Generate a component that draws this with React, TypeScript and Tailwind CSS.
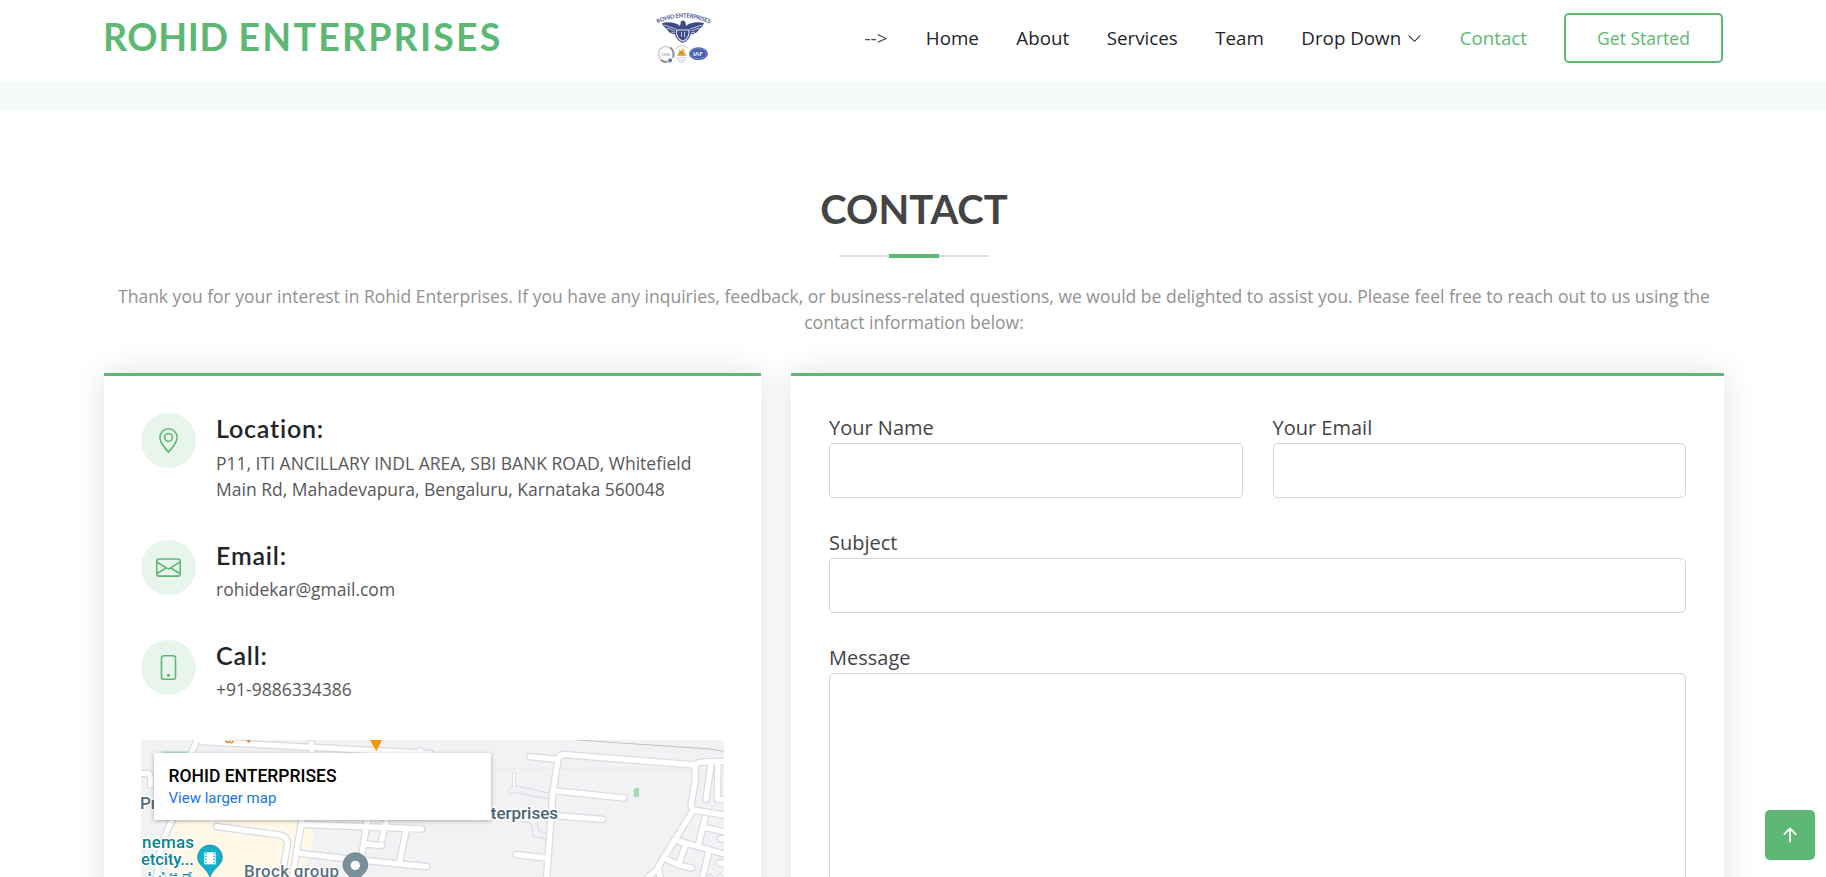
import React from "react";
import { BsGeoAlt, BsEnvelope, BsPhone, BsArrowUpShort, BsChevronDown } from "react-icons/bs";

const LINKS = ["Home", "About", "Services", "Team"];

function Logo() {
  return (
    <svg className="h-[54px] w-[60px]" viewBox="0 0 60 54">
      <path id="arc" d="M4.500 13.500 Q30 1.500 56 13.500" fill="none" />
      <text fontFamily="Lato, sans-serif" fontWeight="700" fontSize="5.8" fill="#4b588f" textLength="54">
        <textPath href="#arc">ROHID ENTERPRISES</textPath>
      </text>
      <g fill="#3a4b87">
        <path d="M9 13 C15 11.500 23 12 27 16 L28 11 L31 10.500 L32.500 12.500 L33 16 C37 12 45 11.500 51 13 C50 16 48 18 46 19 C45 22 42 24 38 24.500 L35 22 L25 22 L22 24.500 C18 24 15 22 14 19 C12 18 10 16 9 13Z" />
        <path d="M21.500 19 L38 19 C38.500 26 35 31 29.800 33 C24.500 31 21 26 21.500 19Z" />
      </g>
      <path d="M11 15 L23 19 M14 18 L22 21 M18 22L22 23 M49 15 L37 19 M46 18 L38 21 M42 22L38 23" stroke="#e3e6f0" strokeWidth=".8" />
      <path d="M23.500 20 L36 20 C36.500 26 34 29.500 29.800 31.300 C25.500 29.500 23 26 23.500 20Z" fill="none" stroke="#e6e9f3" strokeWidth="1.100" />
      <path d="M28.500 22v5M31.500 22v5" stroke="#c4cae0" strokeWidth="1" />
      <circle cx="13" cy="44" r="7.600" fill="#fbf9f9" stroke="#ded4d5" strokeWidth="1.800" />
      <path d="M8 50 a8 8 0 0 0 6 2M17 37.500a8 8 0 0 1 3.500 5v5" fill="none" stroke="#918e91" strokeWidth="2" />
      <text x="8.500" y="45.500" fontSize="3.800" fill="#999" fontFamily="Lato, sans-serif">CERL</text>
      <circle cx="17" cy="50.500" r="2" fill="#5b75b3" />
      <path d="M22.500 39Q28 33 34 38" fill="none" stroke="#d6d7de" strokeWidth="1.200" />
      <path d="M24 46 L26.500 39 L28 41.500 L30 37.500 L33.500 46Z" fill="#e6b552" />
      <path d="M26.500 45l1.800-4 2 4" stroke="#a87e40" fill="none" />
      <path d="M23 47.800h11M24 50h9M26 52h5" stroke="#c6cee3" />
      <ellipse cx="45.500" cy="43.700" rx="9.500" ry="6.400" fill="#4560ae" />
      <ellipse cx="45.500" cy="43.700" rx="8" ry="5" fill="none" stroke="#8497cf" strokeWidth=".7" />
      <text x="40" y="46" fontSize="6.300" fontWeight="700" fill="#fff" fontFamily="Lato, sans-serif">IAF</text>
    </svg>
  );
}

const LEFT_ROADS = [
  "M205 20L180 80L130 260L95 340L80 441",
  "M20 130L50 130Q62 130 62 145L62 165",
  "M215 35L900 70",
  "M545 40L545 80",
  "M738 50L738 80",
  "M870 62L872 80",
  "M515 270L488 441",
  "M260 290L450 315Q475 320 472 345L455 441",
  "M515 283L875 297",
  "M512 370L640 385L890 410",
  "M712 270L695 380",
  "M770 270L755 330",
  "M830 295L808 398",
  "M705 342L755 346",
  "M20 335L55 345",
];
const RIGHT_ROADS = [
  "M300 80L380 88",
  "M350 441L368 190L385 85Q388 72 405 74L795 105Q808 94 830 96L882 94",
  "M370 182L582 204",
  "M365 256L518 268",
  "M260 374L350 384",
  "M795 105L796 150L783 225L790 240L882 255",
  "M843 105L828 208",
  "M864 105L862 208L882 210",
  "M790 240L685 410L690 441",
  "M825 265L805 345",
  "M822 292L882 305",
  "M735 330L882 372",
  "M765 350L748 398",
  "M700 382L745 405L785 414",
  "M835 370L818 441",
  "M685 415L655 441",
  "M868 398L882 402",
  "M872 326L882 328",
];

function Roads({ paths }: { paths: string[] }) {
  return (
    <g fill="none" strokeLinecap="round" strokeLinejoin="round">
      {paths.map((d) => <path key={d} d={d} stroke="#d9dae2" strokeWidth="23" />)}
      {paths.map((d) => <path key={d} d={d} stroke="#fff" strokeWidth="16" />)}
    </g>
  );
}

function MapPanel() {
  return (
    <div className="relative h-[362px] w-full overflow-hidden bg-[#f1f2f4]">
      <svg className="block h-[160px] w-[583px]" viewBox="0 0 583 160" fontFamily="Roboto, sans-serif">
        <g transform="translate(-11 -10) scale(.33333)">
          <path d="M150 265L520 265L550 300L550 340L530 395L500 510L120 510L110 330Z" fill="#fef8e7" />
          <path d="M95 64h88v10h-88z" fill="#b9e2c5" />
          <Roads paths={LEFT_ROADS} />
          <path d="M720 30h36l-17 34z" fill="#f29900" />
          <path d="M349 30h14l-7 10z" fill="#e8891a" />
          <path d="M286 32q6 10 12 2q8 10 12-2" fill="none" stroke="#d97b18" strokeWidth="4" />
          <path d="M240 441C228 410 203 408 203 382A37 37 0 0 1 277 382C277 408 252 410 240 441Z" fill="#12b1c7" stroke="#0b8697" strokeWidth="2" />
          <path d="M223 367h34v36h-34z" fill="#fff" />
          <path d="M228 368v34M252 368v34" stroke="#12b1c7" strokeWidth="4" strokeDasharray="5 4" />
          <path d="M676 464C664 436 639 430 639 405A37 37 0 0 1 713 405C713 430 688 436 676 464Z" fill="#78909c" stroke="#607580" strokeWidth="2" />
          <circle cx="676" cy="406" r="14" fill="#fff" />
        </g>
        <g transform="translate(289 -10) scale(.33333)">
          <path d="M440 30L840 57L882 64" fill="none" stroke="#bfc1c5" strokeWidth="3" />
          <path d="M180 115H882" stroke="#e5e7ea" strokeWidth="2" />
          <g fill="none" stroke="#d9dae2" strokeWidth="3">
            <path d="M360 190L260 168Q238 165 235 185Q240 195 250 186L360 208" />
            <path d="M270 274L303 280L310 320L350 326M322 275L326 305L350 308" />
            <path d="M830 441q10-15 20 0M860 441q10-15 20 0" />
          </g>
          <path d="M252 130v36" stroke="#d9dae2" strokeWidth="11" strokeLinecap="round" />
          <path d="M252 130v38" stroke="#fff" strokeWidth="6" strokeLinecap="round" />
          <Roads paths={RIGHT_ROADS} />
          <path d="M616 174h11v27h-16v-20z" fill="#a8dab5" />
        </g>
        <g fontWeight="500" fontSize="17" stroke="#fff" strokeWidth="3" paintOrder="stroke" strokeLinejoin="round">
          <text x="-1" y="69" fill="#536b78">Pr</text>
          <text x="417" y="79" textAnchor="end" fill="#4a6572">Rohid Enterprises</text>
          <text x="1" y="107.500" fill="#0d8490" textLength="52">nemas</text>
          <text x="0" y="125" fill="#0d8490" textLength="53">etcity...</text>
          <text x="6" y="140" fontSize="13" fill="#0d8490" textLength="46">ಸಿವಿಆರ್</text>
          <text x="103" y="137" fill="#5a7180" textLength="95">Brock group</text>
        </g>
      </svg>
      <div className="absolute left-[13px] top-[13px] h-[67px] w-[337px] rounded-[2px] bg-white pl-[14.500px] pt-[12px] font-[Roboto] shadow-[0_1px_4px_rgba(0,0,0,0.3)]">
        <p className="text-[17.500px] font-medium leading-[22px] text-black">ROHID ENTERPRISES</p>
        <p className="text-[15px] leading-[22px] text-[#1a73e8]">View larger map</p>
      </div>
    </div>
  );
}

function InfoRow({ icon, title, className, children }: { icon: React.ReactNode; title: string; className: string; children: React.ReactNode }) {
  return (
    <div className={`flex ${className}`}>
      <div className="flex size-[55px] shrink-0 items-center justify-center rounded-full bg-[#e8f5ec] text-[25px] text-[#5cb874]">{icon}</div>
      <div className="pl-5">
        <h4 className="text-[25px] font-semibold leading-[30px] tracking-[0.8px] text-[#212529] font-[Lato]">{title}</h4>
        {children}
      </div>
    </div>
  );
}

function Field({ label, area }: { label: string; area?: boolean }) {
  return (
    <label className="block text-[20px] leading-[30px] text-[#444444]">
      {label}
      {area ? (
        <textarea className="block h-[310px] w-full resize-none rounded-[5px] border border-[#ced4da] bg-white" />
      ) : (
        <input className="block h-[55px] w-full rounded-[5px] border border-[#ced4da] bg-white px-3" />
      )}
    </label>
  );
}

export default function App() {
  return (
    <div className="relative h-[877px] overflow-hidden bg-white font-['Open_Sans',sans-serif] text-[#444444]">
      <header className="flex h-[82px] items-start justify-between pl-[103px] pr-[103px]">
        <div className="flex">
          <h1 className="mt-[14px] flex w-[550px] gap-[10px] whitespace-nowrap font-[Lato] text-[37.500px] font-bold leading-[46px] text-[#5cb874]">
            <span className="tracking-[0.6px]">ROHID</span>{" "}
            <span className="tracking-[2.2px]">ENTERPRISES</span>
          </h1>
          <div className="mt-[10px]"><Logo /></div>
        </div>
        <nav className="mt-[13px] flex h-[50px] items-center whitespace-nowrap text-[18.750px] text-[#212529]">
          <span className="mr-px text-[#444444]">--&gt;</span>
          {LINKS.map((l) => <a key={l} className="ml-[37.500px]">{l}</a>)}
          <a className="ml-[37.500px] flex items-center gap-[6px]">Drop Down <BsChevronDown className="size-[15px]" /></a>
          <a className="ml-[37.500px] text-[#5cb874]">Contact</a>
          <a className="ml-[37px] flex h-[50px] w-[159px] items-center justify-center rounded-[5px] border-2 border-[#5cb874] text-[17.500px] text-[#5cb874]">Get Started</a>
        </nav>
      </header>
      <div className="h-[28px] bg-[#f6fbf7]" />
      <main className="flex flex-col items-center pl-[2px]">
        <h2 className="mt-[75px] h-[69px] font-[Lato] text-[40px] font-bold leading-[48px]">CONTACT</h2>
        <div className="flex h-1 w-[150px] items-center bg-[linear-gradient(#dddddd,#dddddd)] bg-[length:100%_2px] bg-center bg-no-repeat">
          <div className="mx-auto h-1 w-[50px] bg-[#5cb874]" />
        </div>
        <p className="mt-[25px] text-center text-[17.500px] leading-[26.250px] text-[#919191]">
          Thank you for your interest in Rohid Enterprises. If you have any inquiries, feedback, or business-related questions, we would be delighted to assist you. Please feel free to reach out to us using the<br />contact information below:
        </p>
        <div className="mt-[37px] flex w-[1620px] gap-[30px]">
          <section className="h-[740px] w-[657px] border-t-[3px] border-[#5cb874] bg-white px-[37px] pt-[37px] shadow-[0_0_30px_rgba(0,0,0,0.12)]">
            <InfoRow icon={<BsGeoAlt />} title="Location:" className="h-[127px]">
              <p className="mt-[7px] whitespace-nowrap text-[17.500px] leading-[26.250px] text-[#585858]">
                P11, ITI ANCILLARY INDL AREA, SBI BANK ROAD, Whitefield<br />Main Rd, Mahadevapura, Bengaluru, Karnataka 560048
              </p>
            </InfoRow>
            <InfoRow icon={<BsEnvelope />} title="Email:" className="h-[100px]">
              <p className="mt-[6px] text-[17.500px] leading-[26.250px] text-[#585858]">rohidekar@gmail.com</p>
            </InfoRow>
            <InfoRow icon={<BsPhone />} title="Call:" className="h-[100px]">
              <p className="mt-[6px] text-[17.500px] leading-[26.250px] text-[#585858]">+91-9886334386</p>
            </InfoRow>
            <MapPanel />
          </section>
          <section className="flex h-[740px] w-[933px] flex-col gap-[30px] border-t-[3px] border-[#5cb874] bg-white px-[38px] pt-[37px] shadow-[0_0_30px_rgba(0,0,0,0.12)]">
            <div className="grid grid-cols-2 gap-[30px]">
              <Field label="Your Name" />
              <Field label="Your Email" />
            </div>
            <Field label="Subject" />
            <Field label="Message" area />
          </section>
        </div>
      </main>
      <button className="absolute left-[1765px] top-[810px] flex size-[50px] items-center justify-center rounded-[5px] bg-[#5cb874] text-white">
        <BsArrowUpShort className="size-[30px]" />
      </button>
    </div>
  );
}
